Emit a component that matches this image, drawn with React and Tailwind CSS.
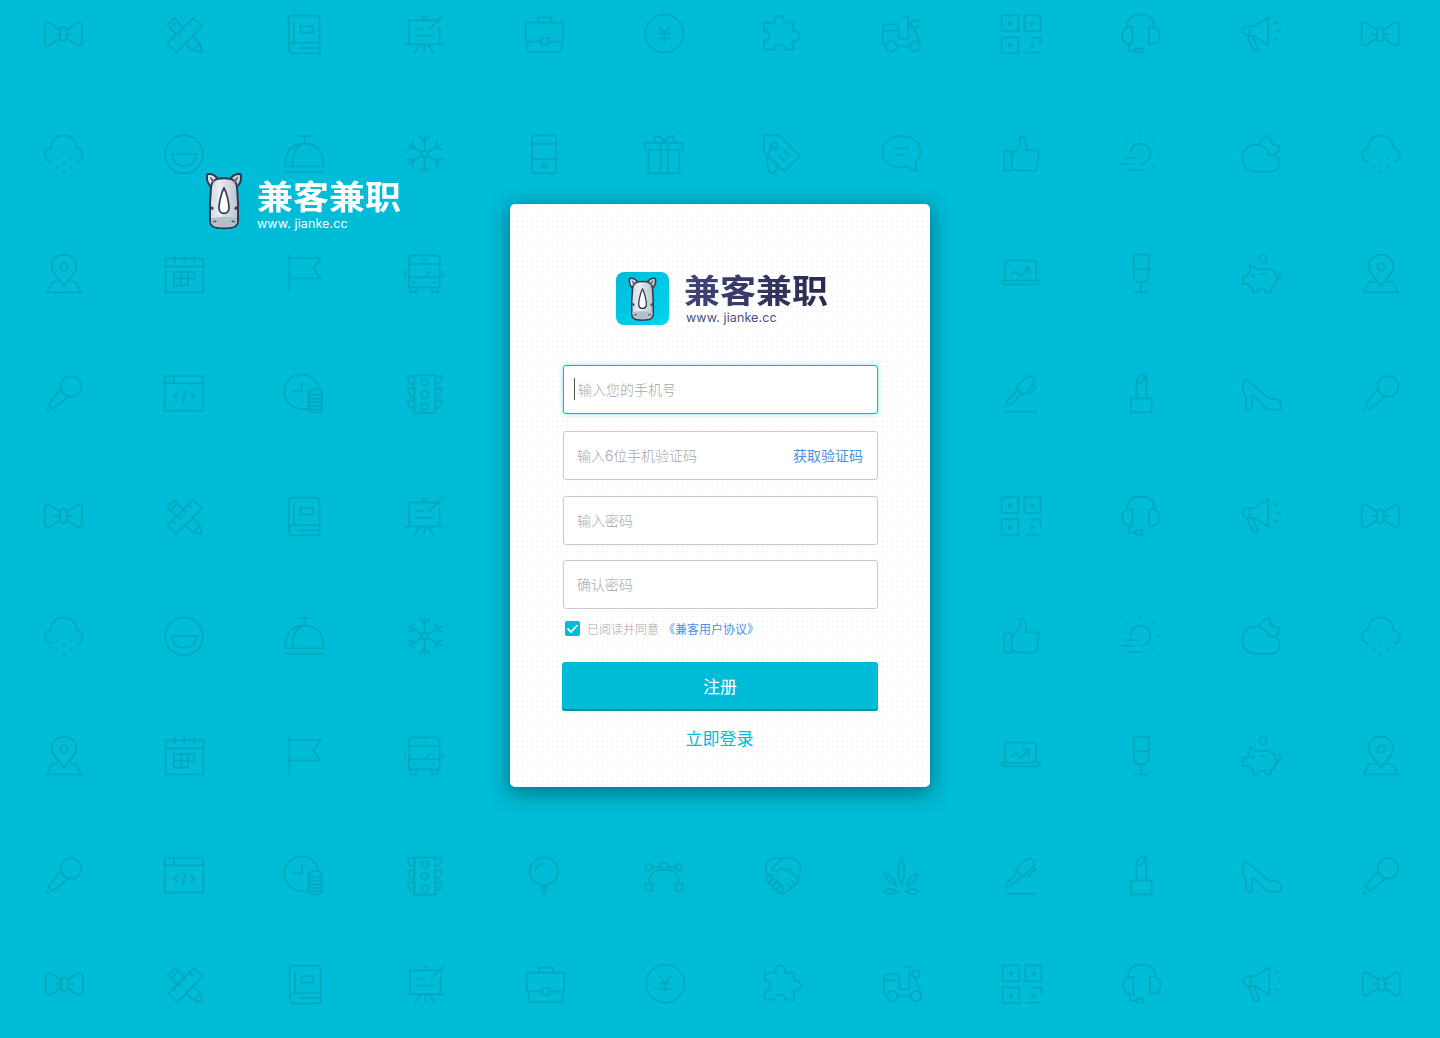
const P = (d) => <path d={d} />;

const Bow = () => P("M181 91L150 70C142 65 134 68 134 78V126C134 136 142 139 150 134L181 113M199 91L230 70C238 65 246 68 246 78V126C246 136 238 139 230 134L199 113M190 82Q200 82 200 93V112Q200 123 190 123Q180 123 180 112V93Q180 82 190 82ZM162 102H180M200 102H218");
const Ruler = () => P("M219 54L246 80L168 157L142 130ZM206 68l9 10M190 86l6 6M173 100l11 11M159 117l6 6M190 83L163 54L142 76L169 103M172 63L151 85M218 108L239 129L245 157L217 151L197 130M239 130L219 150");
const Book = () => P("M146 145V58Q146 47 158 47H228Q239 47 239 58V160H160Q146 160 146 145Q146 130 160 129H239M162 66V128M182 78H218V98H182ZM174 144H238");
const Easel = () => P("M239 78V132M239 61H147V132M239 61V70M135 133H251M180 135L161 160M194 135V156M205 135L224 160M188 60V50H199V60M251 44L208 87M167 87H190M167 107H221");
const Briefcase = () => P("M184 125H137V68H250V125H205M174 67V53H215V67M143 126V156H245V126M184 114H205V135H184Z");
const Yen = () => (
  <>
    <circle cx="193" cy="101" r="57" />
    {P("M176 78L193 100L210 78M193 100V128M175 101H211M175 116H211")}
  </>
);
const Puzzle = () => P("M132 68H164C162 52 170 47 178 47C186 47 194 52 192 68H219V93C232 91 240 99 240 107C240 116 232 124 219 121V149H193C194 139 186 134 178 134C170 134 162 139 163 149H132V121C142 124 148 116 148 107C148 98 142 92 132 93Z");
const Scooter = () => (
  <>
    <circle cx="154" cy="139" r="15.500" />
    <circle cx="225" cy="139" r="15.500" />
    {P("M139 138Q128 134 128 124V84Q128 73 139 73H164Q175 73 175 84V108Q175 118 186 118H194Q205 118 205 108V51H188M128 92H175M170 139H210M207 77H213M234 62H228Q213 62 213 72Q213 80 222 82H234ZM222 84L241 132")}
  </>
);
const Qr = () => (
  <>
    {P("M125 46H175V93H125ZM193 46H241V93H193ZM125 112H175V159H125ZM212 113H241V134M197 158H241")}
    <path d="M147 67h6v6h-6zM214 67h6v6h-6zM147 133h6v6h-6zM214 133h6v6h-6z" fill="currentColor" />
  </>
);
const Headset = () => P("M141 80C141 55 158 44 182 44C206 44 223 55 223 80M157 81H148Q126 85 126 106Q126 128 148 132H157ZM207 81H216Q239 85 239 106Q239 128 216 132H207ZM147 132V152H166M167 146H187V158H167Z");
const Megaphone = () => P("M148 78H163L205 51V134L163 108H148Q127 105 127 93Q127 81 148 78ZM149 78V108M142 109L158 146Q162 155 170 153Q176 149 173 142L158 109M223 71L234 65M228 93H242M223 115L234 121");

const Rain = () => P("M154 125Q134 120 135 102Q137 86 152 85Q156 47 191 47Q226 47 230 85Q247 88 248 104Q248 120 231 125M172 111v7M213 111v7M192 125v8M172 138v8M213 138v8M192 153v9");
const Smile = () => (
  <>
    <circle cx="192" cy="103" r="57" />
    {P("M156 102H230Q226 138 192 138Q160 138 156 102Z")}
  </>
);
const Cloche = () => P("M136 139H250V130Q248 72 193 70Q138 72 136 130ZM158 139V130Q160 80 190 71M136 156H251M171 48H215M193 48V70");
const Snow = () => (
  <g transform="translate(194 102)">
    <circle r="9.500" />
    {[0, 60, 120, 180, 240, 300].map((a) => (
      <path key={a} transform={`rotate(${a})`} d="M0-10V-58M-16-54L0-37L16-54" />
    ))}
  </g>
);
const Phone = () => (
  <>
    <rect x="156" y="46" width="73" height="114" rx="10" />
    <circle cx="193" cy="138" r="6" />
    {P("M156 72H229M156 118H229")}
  </>
);
const Gift = () => P("M134 69H248V90H134ZM145 90V160H238V90M182 69V160M203 69V160M192 68C184 44 166 44 162 56Q161 64 167 68M193 68C201 44 219 44 223 56Q224 64 217 68");
const Tag = () => (
  <>
    <circle cx="162" cy="78" r="11" />
    {P("M131 46H179L240 108L193 155L131 94ZM167 84Q158 72 150 90Q141 105 142 130Q145 160 157 160Q172 158 169 132M177 107L195 125M191 90L209 109")}
  </>
);
const Bubble = () => P("M226 126Q242 112 242 92C240 64 215 48 184 48C152 48 127 67 127 96C127 125 150 143 184 142Q194 141 200 140Q215 147 230 153ZM161 85H206M161 105H191");
const Thumb = () => P("M133 94H155V152H133ZM155 104Q178 84 180 74V56Q181 48 188 49Q200 54 199 90H226Q237 92 236 102L231 142Q230 152 218 152H180Q168 152 155 143");
const Sun = () => P("M151 103Q152 72 182 71Q212 74 212 102Q210 130 179 132M180 43v8M139 60l6 6M222 60l-6 6M230 102h9M216 136l6 6M132 114H173M122 132H162M143 150H187");
const CloudMoon = () => P("M127 115C127 88 146 74 166 74C188 74 202 86 206 104C226 100 239 112 239 128C239 145 226 155 212 155H168C144 155 127 140 127 115ZM178 72Q184 52 209 47Q207 76 240 79Q236 97 225 104");

const Pin = () => (
  <>
    <circle cx="192" cy="81" r="11" />
    {P("M192 138C172 112 155 98 155 79C155 58 172 44 192 44C212 44 229 58 229 79C229 98 212 112 192 138ZM173 126H156L140 157H244L228 126H211")}
  </>
);
const Calendar = () => P("M137 55H250V157H137ZM137 80H250M163 43V68M193 43V68M223 43V68M162 96H223V116H204V137H162ZM162 116H204M183 96V137M204 96V116");
const Flag = () => P("M148 43V158M148 54H242L220 86L242 115H148");
const Bus = () => P("M147 142V58Q147 46 158 46H228Q239 46 239 58V142ZM147 72H239M147 112H239M186 59H199M211 94L193 111M157 127H171M213 127H227M136 93V111M248 93V111M151 142V157H169V142M215 142V157H233V142");
const Laptop = () => P("M134 121V72Q134 62 144 62H219Q229 62 229 72V121M125 122H239Q239 133 228 133H136Q125 133 125 122ZM155 105L167 93L182 109L208 83M190 83H208V101");
const Glass = () => P("M161 44H206V105Q205 128 183 128Q162 128 161 105ZM161 87H206M183 128V157M161 157H206");
const Pig = () => (
  <>
    <circle cx="189" cy="56" r="11" />
    <circle cx="159" cy="106" r="3" fill="currentColor" />
    {P("M152 91L149 76Q160 76 168 87H205Q229 92 230 117Q229 132 213 144V157H196V147H175V157H159V144Q148 138 143 132H129V108H142Q146 96 152 91M178 102H201M231 118Q246 113 241 100L235 97")}
  </>
);

const Mic = () => (
  <>
    <circle cx="213" cy="79" r="31" />
    {P("M183 86L145 134L158 147L206 110M137 148l9 8")}
  </>
);
const Code = () => P("M134 48H250V152H134ZM134 70H250M162 48V70M174 99L162 110L174 123M198 90L187 132M211 99L224 110L211 123");
const Coins = () => (
  <>
    <ellipse cx="225" cy="96" rx="20" ry="9" />
    {P("M202 144A52 52 0 1 1 236 86M186 66V94H157M205 96V150Q208 158 225 158Q243 158 246 150V96M205 108Q208 117 225 117Q243 117 246 108M205 119Q208 128 225 128Q243 128 246 119M205 130Q208 139 225 139Q243 139 246 130M205 140Q208 149 225 149Q243 149 246 140")}
  </>
);
const Traffic = () => (
  <>
    <rect x="163" y="46" width="63" height="112" />
    {[0, 36, 72].map((y) => (
      <g key={y} transform={`translate(0 ${y})`}>
        <circle cx="194" cy="67" r="10.500" />
        <path d="M163 49H142Q146 66 152 72H163M226 49H246Q242 66 236 72H226" />
      </g>
    ))}
  </>
);
const Pen = () => P("M135 155H230M168 84L195 55Q206 45 216 52Q228 60 220 73L190 105ZM218 74L227 81L204 104M172 90L140 124V132Q150 135 156 130L184 103M141 131L135 137");
const Lipstick = () => P("M153 115H215V157H153ZM169 114V68Q174 44 192 43Q199 44 199 52V114M169 70Q194 72 195 44");
const Heel = () => P("M138 57L196 108Q206 117 222 117Q243 120 242 132V149H215Q203 149 196 144L164 111Q156 104 156 110V149H138V110Q116 80 138 57Z");
const Balloon = () => (
  <>
    <circle cx="192" cy="88" r="42" />
    {P("M166 87Q168 68 189 64M188 131L182 139H202L196 131M192 140V161")}
  </>
);
const Bezier = () => (
  <>
    <circle cx="146" cy="75" r="10" />
    <circle cx="237" cy="75" r="10" />
    {P("M181 64H202V84H181ZM156 75H181M202 75H227M146 124Q148 86 181 83M237 124Q235 86 202 83M136 125H157V146H136ZM227 125H248V146H227Z")}
  </>
);
const Handshake = () => (
  <>
    {P("M144 98Q128 76 144 58Q160 42 186 50Q210 40 228 54Q246 72 240 94Q238 104 233 108M187 50L156 80Q156 90 170 88L184 78Q200 90 215 78M208 86L233 110Q238 120 228 124Q226 136 215 134Q212 146 202 144Q198 160 186 152L178 146M212 116L226 128M202 126L214 138")}
    {[0, 1, 2, 3].map((i) => (
      <rect key={i} x="-6" y="-12" width="13" height="24" rx="6.500" transform={`translate(${147 + i * 11} ${109 + i * 11}) rotate(42)`} />
    ))}
  </>
);
const Leaf = () => P("M184 49Q165 88 184 127Q203 88 184 49ZM133 94Q160 98 169 131Q142 124 133 94ZM235 94Q208 98 199 131Q226 124 235 94ZM131 149Q150 132 171 149Q150 164 131 149ZM237 149Q218 132 197 149Q218 164 237 149Z");

const ROW_A = [Bow, Ruler, Book, Easel, Briefcase, Yen, Puzzle, Scooter, Qr, Headset, Megaphone, Bow];
const ROW_B = [Rain, Smile, Cloche, Snow, Phone, Gift, Tag, Bubble, Thumb, Sun, CloudMoon, Rain];
const ROW_C = [Pin, Calendar, Flag, Bus, null, null, null, null, Laptop, Glass, Pig, Pin];
const ROW_D = [Mic, Code, Coins, Traffic, Balloon, Bezier, Handshake, Leaf, Pen, Lipstick, Heel, Mic];

const ROWS = [
  [ROW_A, "h-[120px]"],
  [ROW_B, "h-[120px]"],
  [ROW_C, "h-[120px]"],
  [ROW_D, "h-[122px]"],
  [ROW_A, "h-[120px]"],
  [ROW_B, "h-[120px]"],
  [ROW_C, "h-[120px]"],
  [ROW_D, "h-[108px]"],
  [ROW_A, "h-[88px] pl-px"],
];

function Pattern() {
  return (
    <div aria-hidden="true" className="absolute inset-0 flex flex-col overflow-hidden text-[#00a7be]">
      {ROWS.map(([icons, cls], r) => (
        <div key={r} className={`flex shrink-0 ${cls}`}>
          {icons.map((Icon, c) => (
            <div key={c} className={`w-[120px] shrink-0 ${c === 11 ? "-ml-[3px]" : ""}`}>
              {Icon && (
                <svg viewBox="0 0 360 360" className="size-[120px]" fill="none" stroke="currentColor" strokeWidth="5.200">
                  <Icon />
                </svg>
              )}
            </div>
          ))}
        </div>
      ))}
    </div>
  );
}

function Rhino({ className, id }) {
  return (
    <svg viewBox="0 0 108 172" className={className}>
      <defs>
        <linearGradient id={id} x1="0" x2="1">
          <stop offset="0" stopColor="#d3dce4" />
          <stop offset="0.35" stopColor="#e6ecf1" />
          <stop offset="1" stopColor="#b9c5cf" />
        </linearGradient>
      </defs>
      <g stroke="#34364e" strokeWidth="6" strokeLinejoin="round">
        <path d="M20 46C6 40 0 20 4 6C18 2 34 12 37 26Z" fill="#dfe6ea" />
        <path d="M88 46C102 40 108 20 104 6C90 2 74 12 71 26Z" fill="#c9d2d9" />
        <path d="M54 18C28 18 17 24 15 46L12 90V142C12 162 22 168 54 168C86 168 96 162 96 142V90L93 46C91 24 80 18 54 18Z" fill={`url(#${id})`} />
      </g>
      <path d="M11 13Q25 18 26 32Q14 30 11 13ZM97 13Q83 18 82 32Q94 30 97 13Z" fill="#6b7386" />
      <path d="M15 137Q54 130 93 137V142C93 160 84 165 54 165C24 165 15 160 15 142Z" fill="#b3bfc9" />
      <path d="M54 47C48 57 39 88 39 107Q40 123 54 123Q68 123 69 107C69 88 60 57 54 47Z" fill="#fff" stroke="#34364e" strokeWidth="5" />
      <path d="M15 102l7 3v8l-7-2zM93 102l-7 3v8l7-2z" fill="#34364e" />
      <path d="M22 149q5-5 9 0M77 149q4-5 9 0" fill="none" stroke="#4a4e63" strokeWidth="4" />
    </svg>
  );
}

function Wordmark({ className }) {
  return (
    <div className={`h-[38px] origin-top scale-y-[0.93] text-[36px] leading-[37px] font-bold whitespace-nowrap ${className}`}>
      兼客兼职
    </div>
  );
}

function Field({ children, className }) {
  return (
    <div className={`flex h-[49px] items-center rounded-[3px] border bg-white pr-[14px] text-[14px] font-light text-[#a6a6aa] ${className}`}>
      {children}
    </div>
  );
}

export default function App() {
  return (
    <div className="relative h-[1038px] w-[1440px] overflow-hidden bg-[#00bcd7] font-['Noto_Sans_CJK_SC',sans-serif]">
      <Pattern />
      <div className="relative flex items-start pl-[206px]">
        <div className="mt-[172px] flex h-[60px] w-[194px] text-white">
          <Rhino id="rhinoLarge" className="h-[58px] w-[36px] shrink-0" />
          <div className="ml-[15px] shrink-0">
            <Wordmark className="mt-[5px]" />
            <div className="h-[16px] pt-px font-['Inter'] text-[12.500px] leading-[15px] tracking-[0.120px] whitespace-pre">www. jianke.cc</div>
          </div>
        </div>

        <main className="mt-[204px] ml-[110px] flex h-[583px] w-[420px] flex-col rounded-[5px] bg-white bg-[radial-gradient(circle_at_2.5px_2.5px,#ececee_0.6px,transparent_0.9px)] bg-size-[5px_5px] pr-[52px] pl-[53px] shadow-[0_5px_20px_2px_rgba(0,40,50,0.45)]">
          <div className="mt-[68px] ml-[53px] flex h-[53px] text-[#33365e]">
            <div className="flex size-[53px] shrink-0 items-center justify-center rounded-[8px] bg-linear-to-br from-[#00bcd8] to-[#00d3ee]">
              <Rhino id="rhinoSmall" className="h-[44px] w-[29px]" />
            </div>
            <div className="ml-[15px] shrink-0">
              <Wordmark className="-mt-px bg-linear-to-r from-[#41457a] to-[#282b4e] bg-clip-text text-transparent" />
              <div className="h-[16px] pt-px pl-[2px] font-['Inter'] text-[12.500px] leading-[16px] tracking-[0.120px] whitespace-pre text-[#4b4f7c]">www. jianke.cc</div>
            </div>
          </div>

          <Field className="mt-[40px] border-[#00bcd7] pl-[10px] shadow-[0_0_5px_rgba(0,188,216,0.45)]">
            <span className="mr-[3px] mb-[2px] h-[22px] w-px bg-[#555]" />
            输入您的手机号
          </Field>
          <Field className="mt-[17px] justify-between border-[#c8cacc] pl-[13px]">
            <span className="flex items-center">
              输入<span className="font-['Inter'] tracking-[-0.3px]">6</span>位手机验证码
            </span>
            <a className="font-normal text-[#4a90e2]">获取验证码</a>
          </Field>
          <Field className="mt-[16px] border-[#c8cacc] pl-[13px]">输入密码</Field>
          <Field className="mt-[15px] border-[#c8cacc] pl-[13px]">确认密码</Field>

          <div className="mt-[12px] ml-[2px] flex h-[15px] items-center text-[12px] whitespace-nowrap text-[#a6a6aa]">
            <span className="flex size-[15px] items-center justify-center rounded-[2px] bg-[#00bcd7]">
              <svg viewBox="0 0 15 15" className="size-[15px]" fill="none" stroke="#fff" strokeWidth="1.800">
                <path d="M2.500 7.500L6 11L12.500 4" />
              </svg>
            </span>
            <span className="ml-[7px] font-light">已阅读并同意</span>
            <a className="ml-[4px] text-[#4a90e2]">《兼客用户协议》</a>
          </div>

          <button className="mt-[26px] -ml-px h-[49px] w-[316px] rounded-[3px] bg-[#00bcd7] pb-[2px] text-[17px] text-white shadow-[inset_0_-2px_0_#0090a8]">注册</button>
          <a className="mt-[14px] -ml-[2px] text-center text-[17px] leading-[25px] text-[#00bcd7]">立即登录</a>
        </main>
      </div>
    </div>
  );
}
